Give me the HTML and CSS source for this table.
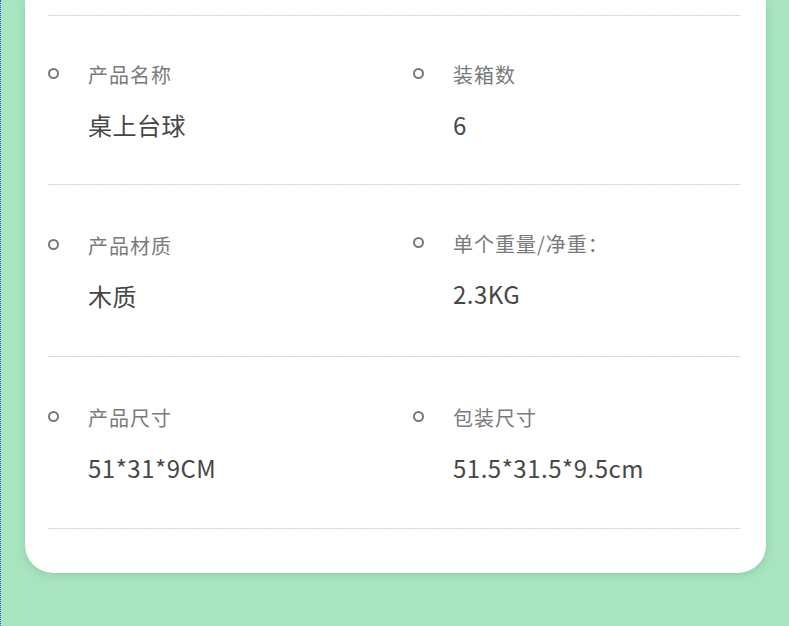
FILE: index.html
```html
<!DOCTYPE html>
<html lang="zh">
<head>
<meta charset="utf-8">
<title>产品参数</title>
<link rel="stylesheet" href="styles.css">
</head>
<body>
<div class="page">
  <div class="card">
    <div class="divider"></div>
    <div class="row first">
      <div class="cell">
        <div class="label"><span class="dot"></span>产品名称</div>
        <div class="value">桌上台球</div>
      </div>
      <div class="cell">
        <div class="label"><span class="dot"></span>装箱数</div>
        <div class="value">6</div>
      </div>
    </div>
    <div class="divider"></div>
    <div class="row">
      <div class="cell">
        <div class="label"><span class="dot"></span>产品材质</div>
        <div class="value">木质</div>
      </div>
      <div class="cell up">
        <div class="label"><span class="dot"></span>单个重量/净重：</div>
        <div class="value">2.3KG</div>
      </div>
    </div>
    <div class="divider"></div>
    <div class="row">
      <div class="cell">
        <div class="label"><span class="dot"></span>产品尺寸</div>
        <div class="value">51*31*9CM</div>
      </div>
      <div class="cell">
        <div class="label"><span class="dot"></span>包装尺寸</div>
        <div class="value">51.5*31.5*9.5cm</div>
      </div>
    </div>
    <div class="divider"></div>
  </div>
</div>
</body>
</html>
```

FILE: styles.css
```css
html, body {
  margin: 0;
  padding: 0;
}
body {
  background: #a9e4c1;
  font-family: "Noto Sans CJK SC", "Noto Sans", sans-serif;
  border-left: 1px dotted #2a4df0;
  min-height: 626px;
  box-sizing: border-box;
}
.page {
  padding: 0 22px 53px 24px;
}
.card {
  background: #ffffff;
  width: 741px;
  border-radius: 0 0 28px 28px;
  box-shadow: 0 2px 8px rgba(40, 110, 70, 0.2);
  padding: 15px 26px 44px 23px;
  box-sizing: border-box;
}
.divider {
  height: 1px;
  background: repeating-linear-gradient(to right, #dadada 0 11px, #ececec 11px 12px);
}
.row {
  display: grid;
  grid-template-columns: 365px 1fr;
  height: 171px;
  box-sizing: border-box;
  padding-top: 46px;
}
.row.first {
  height: 168px;
}
.cell {
  display: flex;
  flex-direction: column;
}
.row + .divider + .row .cell {
  padding-top: 2px;
}
.row + .divider + .row .cell.up {
  padding-top: 0;
}
.label {
  display: flex;
  align-items: center;
  font-size: 20px;
  line-height: 26px;
  color: #7a7a7a;
  letter-spacing: 1px;
}
.dot {
  width: 11px;
  height: 11px;
  border: 2px solid #777777;
  border-radius: 50%;
  box-sizing: border-box;
  margin-left: 0;
  margin-right: 29px;
  margin-top: -4px;
}
.value {
  margin-top: 21px;
  padding-left: 40px;
  font-size: 24px;
  line-height: 32px;
  color: #474747;
  letter-spacing: 0.5px;
}
```
